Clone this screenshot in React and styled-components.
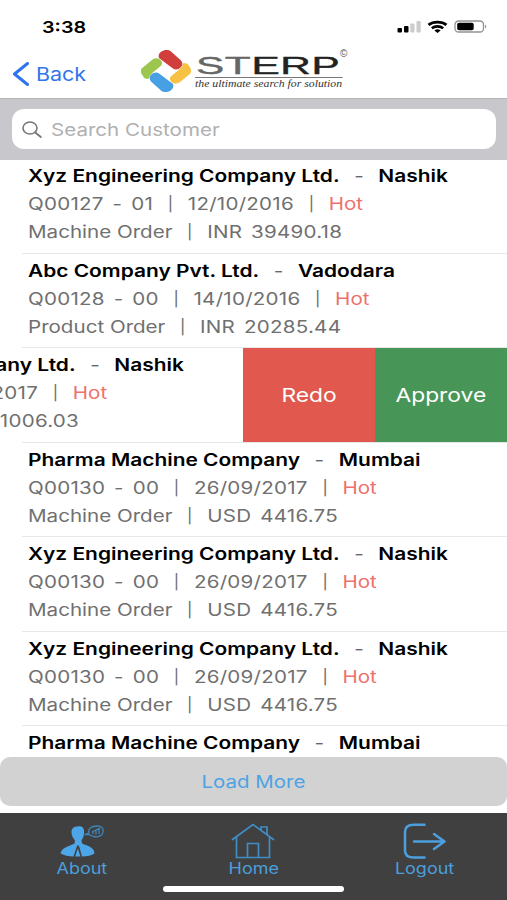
import React, { useState } from 'react'
import styled, { createGlobalStyle } from 'styled-components'

const orders = [
  {
    company: 'Xyz Engineering Company Ltd.',
    city: 'Nashik',
    quote: 'Q00127 - 01',
    date: '12/10/2016',
    status: 'Hot',
    type: 'Machine Order',
    amount: 'INR 39490.18',
  },
  {
    company: 'Abc Company Pvt. Ltd.',
    city: 'Vadodara',
    quote: 'Q00128 - 00',
    date: '14/10/2016',
    status: 'Hot',
    type: 'Product Order',
    amount: 'INR 20285.44',
  },
  {
    company: 'Xyz Engineering Company Ltd.',
    city: 'Nashik',
    quote: 'Q00129 - 00',
    date: '17/09/2017',
    status: 'Hot',
    type: 'Machine Order',
    amount: 'INR 21006.03',
    swiped: true,
  },
  {
    company: 'Pharma Machine Company',
    city: 'Mumbai',
    quote: 'Q00130 - 00',
    date: '26/09/2017',
    status: 'Hot',
    type: 'Machine Order',
    amount: 'USD 4416.75',
  },
  {
    company: 'Xyz Engineering Company Ltd.',
    city: 'Nashik',
    quote: 'Q00130 - 00',
    date: '26/09/2017',
    status: 'Hot',
    type: 'Machine Order',
    amount: 'USD 4416.75',
  },
  {
    company: 'Xyz Engineering Company Ltd.',
    city: 'Nashik',
    quote: 'Q00130 - 00',
    date: '26/09/2017',
    status: 'Hot',
    type: 'Machine Order',
    amount: 'USD 4416.75',
  },
  {
    company: 'Pharma Machine Company',
    city: 'Mumbai',
  },
]

function OrderRow({ order }) {
  return (
    <Row>
      <RowContent $swiped={order.swiped}>
        <Title>
          <span>{order.company}</span>
          <Dash>-</Dash>
          <span>{order.city}</span>
        </Title>
        {order.quote && (
          <>
            <Line>
              <Figures>{order.quote}</Figures>
              <Pipe>|</Pipe>
              <Figures>{order.date}</Figures>
              <Pipe>|</Pipe>
              <Status>{order.status}</Status>
            </Line>
            <Line>
              <span>{order.type}</span>
              <Pipe>|</Pipe>
              <Figures>{order.amount}</Figures>
            </Line>
          </>
        )}
      </RowContent>
      {order.swiped && (
        <>
          <Action $color="#e0584e">
            <Wide>Redo</Wide>
          </Action>
          <Action $color="#479658">
            <Wide>Approve</Wide>
          </Action>
        </>
      )}
    </Row>
  )
}

function App() {
  const [query, setQuery] = useState('')

  return (
    <Screen>
      <GlobalStyle />
      <StatusBar>
        <Clock>3:38</Clock>
        <StatusIcons />
      </StatusBar>
      <NavBar>
        <BackButton>
          <svg width="17" height="24" viewBox="0 0 17 24">
            <path d="M15.5 1.5 2.5 12l13 10.5" fill="none" stroke="#2f74ee" strokeWidth="3" strokeLinecap="round" strokeLinejoin="round" />
          </svg>
          <BackLabel>Back</BackLabel>
        </BackButton>
        <Logo />
      </NavBar>
      <SearchArea>
        <SearchBox>
          <svg width="20" height="17" viewBox="0 0 20 17">
            <ellipse cx="8" cy="7" rx="7" ry="6" fill="none" stroke="#77777a" strokeWidth="1.6" />
            <path d="m13 11.3 5.8 4.6" stroke="#77777a" strokeWidth="1.9" strokeLinecap="round" />
          </svg>
          <SearchInput
            type="text"
            placeholder="Search Customer"
            value={query}
            onChange={(e) => setQuery(e.target.value)}
          />
        </SearchBox>
      </SearchArea>
      <List>
        {orders.map((order, i) => (
          <OrderRow key={i} order={order} />
        ))}
      </List>
      <LoadMoreArea>
        <LoadMore>
          <Wide $scale={1.17}>Load More</Wide>
        </LoadMore>
      </LoadMoreArea>
      <TabBar>
        <Tabs>
          <Tab>
            <AboutIcon />
            <TabLabel>About</TabLabel>
          </Tab>
          <Tab>
            <HomeIcon />
            <TabLabel>Home</TabLabel>
          </Tab>
          <Tab>
            <LogoutIcon />
            <TabLabel>Logout</TabLabel>
          </Tab>
        </Tabs>
        <HomeIndicator />
      </TabBar>
    </Screen>
  )
}

function StatusIcons() {
  return (
    <svg width="92" height="14" viewBox="0 0 92 14">
      <rect x="0.5" y="8" width="4.5" height="4.5" rx="1" fill="#000" />
      <rect x="7" y="6" width="4.5" height="6.5" rx="1" fill="#000" />
      <rect x="13.3" y="3.5" width="4.2" height="9" rx="1" fill="#ccc" />
      <rect x="19.5" y="1" width="4.2" height="11.5" rx="1" fill="#ccc" />
      <path d="M31.5 4.8a12.5 9 0 0 1 18 0" fill="none" stroke="#000" strokeWidth="2.8" />
      <path d="M34.8 8.2a8 6 0 0 1 11.4 0" fill="none" stroke="#000" strokeWidth="2.6" />
      <path d="M37.4 10.4a4.5 3.5 0 0 1 6.2 0L40.5 12.9z" fill="#000" />
      <rect x="58" y="1" width="28.5" height="11" rx="3.6" fill="none" stroke="#929292" strokeWidth="1.3" />
      <rect x="60.2" y="2.8" width="16.5" height="7.5" rx="1.8" fill="#000" />
      <path d="M88 4.5q2.6 2 0 4z" fill="#929292" />
    </svg>
  )
}

function Logo() {
  return (
    <LogoLink href="#">
      <svg width="50" height="42" viewBox="9 7 150 126">
        <g strokeWidth="4" strokeLinejoin="round">
          <path d="M70 14Q84 5 95 11L127 39Q138 53 121 62 112 65 105 60L65 30Q61 21 70 14z" fill="#d03f3c" stroke="#d03f3c" />
          <path d="M98 126Q84 135 73 129L41 101Q30 87 47 78 56 75 63 80L103 110Q107 119 98 126z" fill="#479fe4" stroke="#479fe4" />
          <path d="M13 63 45 37Q58 30 67 39 74 48 66 54L44 72Q33 80 31 91 23 93 19 88L12 77Q9 69 13 63z" fill="#9cc64d" stroke="#9cc64d" />
          <path d="M155 77 123 103Q110 110 101 101 94 92 102 86L124 68Q135 60 137 49 145 47 149 52L156 63Q159 71 155 77z" fill="#f7c244" stroke="#f7c244" />
        </g>
      </svg>
      <LogoText>
        <Brand>
          <em>ST</em>ERP
        </Brand>
        <Tagline>the ultimate search for solution</Tagline>
      </LogoText>
      <Copyright>©</Copyright>
    </LogoLink>
  )
}

function AboutIcon() {
  return (
    <svg width="44" height="36" viewBox="0 0 44 36">
      <path
        d="M18 3.5C22 2.8 24.5 5 24 9.5 24 14 22.5 15.5 21.5 17.5L22 20.5C28 23 34 24 34.5 30.5Q30 33.5 22 33.5L19.5 24.5 18.7 22.5h-1.5L16.5 24.5 13.5 33.5Q6 33.5.5 30.5C2 24 9 23.5 14.5 20.5L15 17.5C13 15 11.5 13 11.5 9 11.5 5.5 14 3 18 3.5z"
        fill="#4da6e8"
      />
      <path d="M17.8 25.5 20.5 33.5h-5.3z" fill="#4da6e8" />
      <path d="M24.5 11.5 29 10C27.5 5.5 32 3 37 3 42 3 43.5 5.5 43 9 42.5 13 38 14.5 33.5 13.5L28.5 11.5z" fill="none" stroke="#3e86bb" strokeWidth="1.3" />
      <path d="M33 11V9M36 11.5V7.5M39 11V5.5M32 9 40 5" stroke="#3e86bb" strokeWidth="1.3" fill="none" />
    </svg>
  )
}

function HomeIcon() {
  return (
    <svg width="44" height="36" viewBox="0 0 44 36">
      <path
        d="M1.5 16.5 22 1.5 42.5 16.5M5.5 14V34.5H38.5V14M16.5 34.5V20.5H27.5V34.5M30 6.8V4H36V11.5"
        fill="none"
        stroke="#3f8dc4"
        strokeWidth="1.7"
        strokeLinecap="round"
      />
    </svg>
  )
}

function LogoutIcon() {
  return (
    <svg width="44" height="36" viewBox="0 0 44 36">
      <path d="M21.5 1.8H11Q2 1.8 2 9V27.5Q2 34.6 11 34.6H21.5M11 18.5H41M31 11 41.5 18.5 31 26" fill="none" stroke="#4b9fdd" strokeWidth="2.5" strokeLinecap="round" strokeLinejoin="round" />
    </svg>
  )
}

const GlobalStyle = createGlobalStyle`
  * {
    box-sizing: border-box;
  }
  body {
    margin: 0;
    background: #fff;
    font-family: Inter, 'Liberation Sans', sans-serif;
  }
  button {
    border: none;
    padding: 0;
    background: none;
    font-family: inherit;
    cursor: pointer;
  }
  svg {
    display: block;
    flex-shrink: 0;
  }
`

const Screen = styled.div`
  width: 507px;
  height: 900px;
  display: flex;
  flex-direction: column;
  overflow: hidden;
  background: #fff;
`

const StatusBar = styled.header`
  height: 50px;
  display: flex;
  justify-content: space-between;
  padding: 20px 18px 0 42px;
`

const Clock = styled.span`
  font-size: 16.5px;
  line-height: 14px;
  font-weight: 600;
  transform: scaleX(1.2);
  transform-origin: left;
`

const NavBar = styled.nav`
  height: 48px;
  display: flex;
  align-items: flex-start;
`

const BackButton = styled.button`
  width: 141px;
  height: 48px;
  display: flex;
  align-items: center;
  gap: 7px;
  padding-left: 12px;
`

const BackLabel = styled.span`
  font-size: 18.5px;
  color: #2f74ee;
  transform: scaleX(1.16);
  transform-origin: left;
`

const LogoLink = styled.a`
  display: flex;
  color: #222;
  text-decoration: none;
`

const LogoText = styled.div`
  width: 147px;
  margin: 5px 0 0 4px;
`

const Brand = styled.div`
  width: 82px;
  height: 23px;
  border-bottom: 1px solid #777;
  font-family: 'Liberation Sans', sans-serif;
  font-size: 23.5px;
  line-height: 22px;
  letter-spacing: 0.4px;
  white-space: nowrap;
  transform: scaleX(1.8);
  transform-origin: left;
  -webkit-text-stroke: 0.4px currentColor;
  em {
    font-style: normal;
    color: #666;
    margin-left: 0.5px;
  }
`

const Tagline = styled.div`
  font-family: 'Liberation Serif', serif;
  font-style: italic;
  font-size: 10px;
  line-height: 12px;
  white-space: nowrap;
  color: #333;
  transform: scaleX(1.175);
  transform-origin: left;
`

const Copyright = styled.span`
  margin-left: -2px;
  font-family: 'Liberation Sans', sans-serif;
  font-size: 10px;
  line-height: 8px;
  color: #555;
`

const SearchArea = styled.div`
  position: relative;
  z-index: 1;
  height: 62px;
  padding: 10px 11px 0 12px;
  background: #c8c7cc;
  border-top: 1px solid #b4b4b7;
`

const SearchBox = styled.div`
  height: 40px;
  display: flex;
  align-items: center;
  gap: 9px;
  padding-left: 10px;
  border-radius: 12px;
  background: #fff;
`

const SearchInput = styled.input`
  width: 360px;
  padding: 0;
  border: none;
  outline: none;
  background: transparent;
  font-family: inherit;
  font-size: 17.5px;
  transform: scaleX(1.175);
  transform-origin: left;
  &::placeholder {
    color: #b0b0b0;
  }
`

const List = styled.main`
  flex: 1;
  min-height: 0;
  margin-top: -1px;
  overflow: hidden;
`

const Row = styled.div`
  position: relative;
  height: 94.5px;
  display: flex;
  overflow: hidden;
  &::after {
    content: '';
    position: absolute;
    left: 22px;
    right: 0;
    bottom: 0;
    height: 1px;
    background: #e8e8ea;
  }
`

const RowContent = styled.div`
  width: 507px;
  flex-shrink: 0;
  margin-left: ${({ $swiped }) => ($swiped ? '-264px' : '0')};
  padding: 3px 0 0 28px;
`

const Line = styled.div`
  display: flex;
  height: 28px;
  line-height: 28px;
  font-size: 17px;
  color: #707070;
  white-space: pre;
  transform: scaleX(1.21);
  transform-origin: left;
`

const Title = styled(Line)`
  font-weight: 600;
  color: #000;
  transform: scaleX(1.23);
`

const Figures = styled.span`
  letter-spacing: 0.2px;
  word-spacing: 2.4px;
`

const Dash = styled.span`
  width: 31.5px;
  text-align: center;
  font-weight: 400;
  color: #666;
`

const Pipe = styled.span`
  width: 28.7px;
  text-align: center;
  font-size: 14.5px;
`

const Status = styled.span`
  color: #ee716c;
`

const Action = styled.button`
  flex: 0 0 132px;
  background: ${({ $color }) => $color};
  color: #fff;
  font-size: 19px;
`

const Wide = styled.span`
  display: inline-block;
  transform: scaleX(${({ $scale }) => $scale || 1.2});
`

const LoadMoreArea = styled.div`
  height: 56px;
`

const LoadMore = styled.button`
  width: 507px;
  height: 49px;
  border-radius: 10px;
  background: #d2d2d2;
  color: #4da3e4;
  font-size: 17.5px;
`

const TabBar = styled.footer`
  height: 87px;
  display: flex;
  flex-direction: column;
  align-items: center;
  background: #404040;
`

const Tabs = styled.div`
  width: 514px;
  height: 73px;
  display: flex;
`

const Tab = styled.button`
  flex: 1;
  display: flex;
  flex-direction: column;
  align-items: center;
  padding-top: 10px;
  color: #4b9fdd;
`

const TabLabel = styled.span`
  font-size: 15.5px;
  line-height: 20px;
  transform: scaleX(1.16);
`

const HomeIndicator = styled.div`
  width: 181px;
  height: 6px;
  border-radius: 3px;
  background: #fff;
`

export default App
